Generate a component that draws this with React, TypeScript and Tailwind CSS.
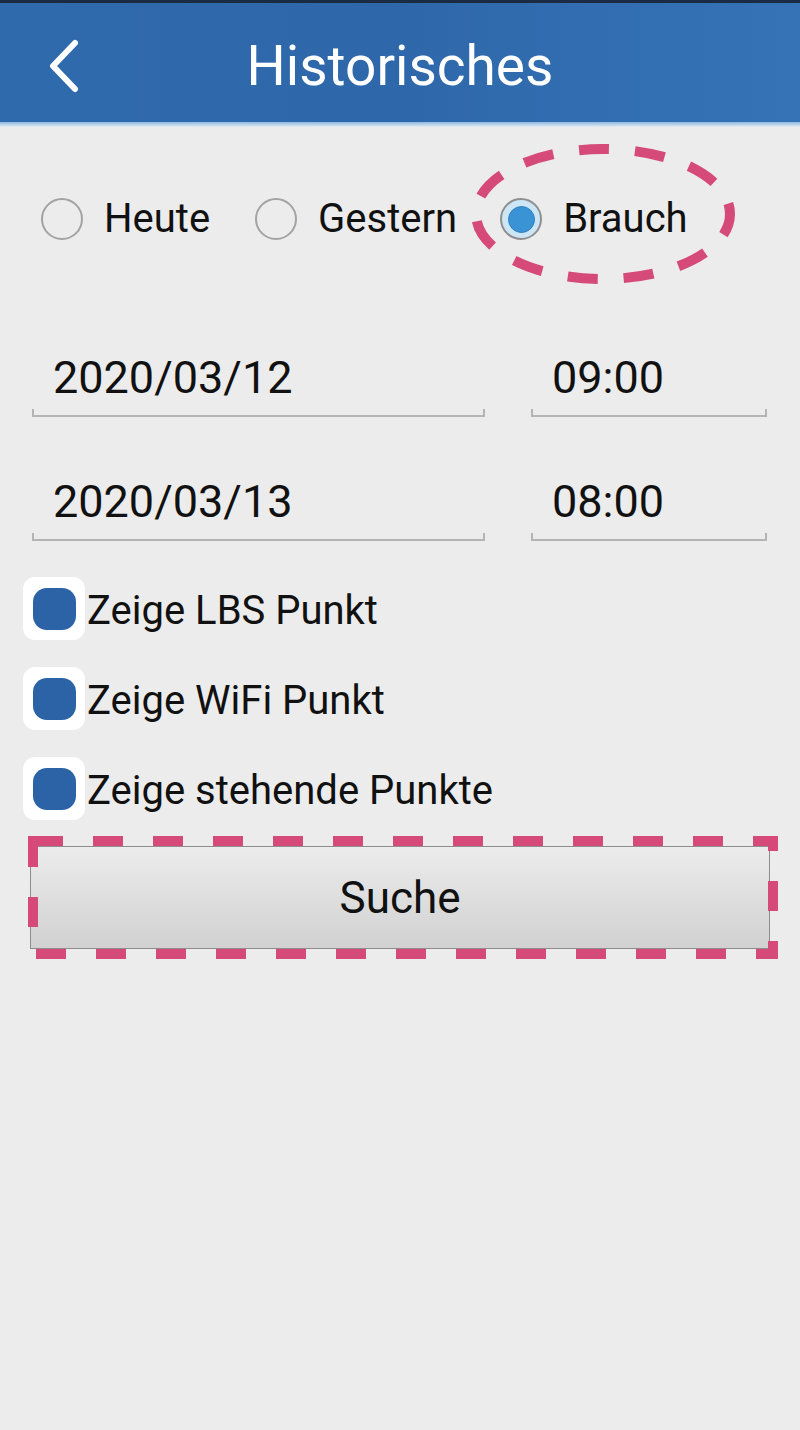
import React from "react";

const font = { fontFamily: "Roboto, 'Noto Sans', sans-serif" };

function Radio({ checked }: { checked?: boolean }) {
  if (checked) {
    return (
      <span className="w-[42px] h-[42px] rounded-full border-2 border-[#8f8f8f] bg-[#cde6f6] flex items-center justify-center shrink-0">
        <span className="w-[27px] h-[27px] rounded-full bg-[#3a93d5] border border-[#2d7fbf]"></span>
      </span>
    );
  }
  return (
    <span className="w-[42px] h-[42px] rounded-full border-2 border-[#a3a3a3] shrink-0"></span>
  );
}

function Field({ value, width }: { value: string; width: string }) {
  return (
    <div className={`${width} flex flex-col`}>
      <span className="pl-[21px] text-[45px] leading-[52px] text-[#111]">{value}</span>
      <div className="mt-[5px] h-[8px] border-x-2 border-b-2 border-[#b4b4b4]"></div>
    </div>
  );
}

const checks = ["Zeige LBS Punkt", "Zeige WiFi Punkt", "Zeige stehende Punkte"];

export default function App() {
  return (
    <div className="w-[800px] h-[1430px] bg-[#ececec] relative overflow-hidden" style={font}>
      <div className="h-[3px] bg-[#1b2b44]"></div>
      <div className="h-[119px] bg-gradient-to-r from-[#2f6aad] via-[#2e68ab] to-[#3573b6] relative flex items-center justify-center">
        <svg className="absolute left-[44px] top-[34px]" width="40" height="56" viewBox="0 0 40 56">
          <path d="M31 6 L9 29 L31 52" fill="none" stroke="#fff" strokeWidth="6" strokeLinecap="round" strokeLinejoin="round" />
        </svg>
        <span className="text-white text-[55px] leading-none pt-[8px]">Historisches</span>
      </div>
      <div className="h-[5px] bg-gradient-to-b from-[#8db7e0] to-[#e4edf5]"></div>

      <div className="mt-[71px] h-[42px] flex items-center pl-[41px]">
        <div className="flex items-center gap-[21px]">
          <Radio />
          <span className="text-[40px] leading-none text-[#111]">Heute</span>
        </div>
        <div className="flex items-center gap-[21px] ml-[45px]">
          <Radio />
          <span className="text-[40px] leading-none text-[#111]">Gestern</span>
        </div>
        <div className="flex items-center gap-[21px] ml-[43px]">
          <Radio checked />
          <span className="text-[40px] leading-none text-[#111]">Brauch</span>
        </div>
      </div>

      <div className="mt-[112px] px-[32px] flex flex-col gap-[59px]">
        <div className="flex gap-[46px]">
          <Field value="2020/03/12" width="w-[453px]" />
          <Field value="09:00" width="w-[236px]" />
        </div>
        <div className="flex gap-[46px]">
          <Field value="2020/03/13" width="w-[453px]" />
          <Field value="08:00" width="w-[236px]" />
        </div>
      </div>

      <div className="mt-[36px] pl-[23px] flex flex-col gap-[27px]">
        {checks.map((label, index) => (
          <div key={index} className="flex items-center">
            <span className="w-[62px] h-[63px] rounded-[12px] bg-white flex items-center justify-center shrink-0">
              <span className="w-[43px] h-[42px] rounded-[14px] bg-[#2c63a6]"></span>
            </span>
            <span className="ml-[2px] pt-[5px] text-[40px] leading-none text-[#111]">{label}</span>
          </div>
        ))}
      </div>

      <div className="mt-[26px] mx-[30px] relative">
        <button className="w-[740px] h-[103px] border border-[#8d8d8d] bg-gradient-to-b from-[#ececec] to-[#d1d1d1] text-[44px] text-[#111] flex items-center justify-center">
          Suche
        </button>
        <svg className="absolute left-[-2px] top-[-10px]" width="752" height="125" viewBox="0 0 752 125">
          <rect x="5" y="5" width="740" height="113" fill="none" stroke="#d64a7a" strokeWidth="10" strokeDasharray="30 30" />
        </svg>
      </div>

      <svg className="absolute left-[467px] top-[141px]" width="272" height="146" viewBox="0 0 272 146">
        <ellipse cx="136" cy="73" rx="127" ry="65" fill="none" stroke="#d64a7a" strokeWidth="10" strokeDasharray="30 26" strokeDashoffset="8" />
      </svg>
    </div>
  );
}
